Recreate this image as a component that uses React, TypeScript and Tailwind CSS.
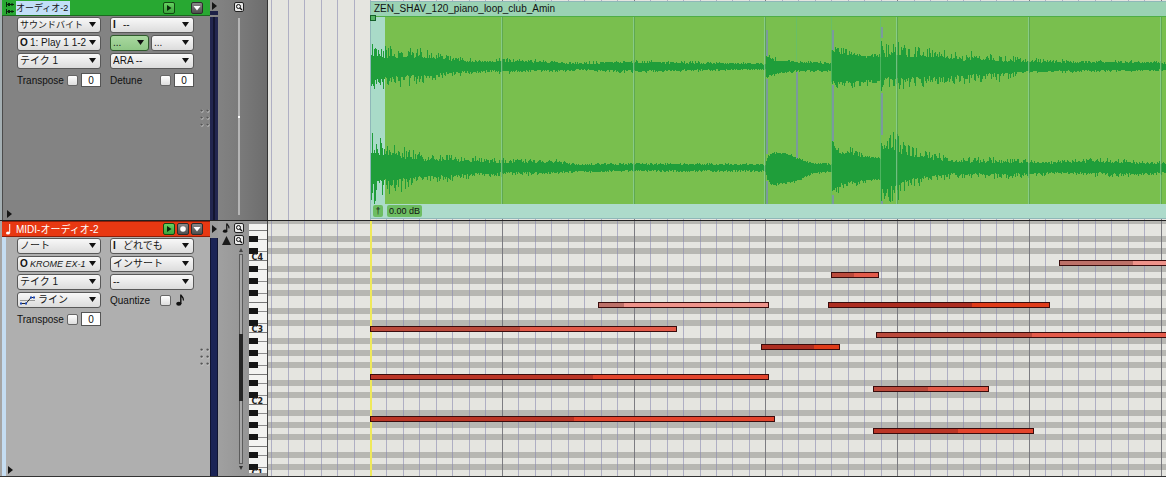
import React, { useState } from "react";

type Option = {
  label: string;
  text: string;
  prefix?: string;
  italic?: boolean;
  green?: boolean;
  curve?: boolean;
  small?: boolean;
};

type Note = { start: number; end: number; split: number; y: number; tone: Tone };
type Tone = "pink" | "light" | "mid" | "deep";

const BEAT = 16.475;
const ORIGIN = 102.5;
const LANE = 6;
const OCTAVE = 72;
const C4_TOP = 33;

// offset of each black key below the top of the C lane, going down the octave
const BLACK_OFFSETS = [12, 24, 36, 54, 66];

const TONES: Record<Tone, string> = {
  pink: "bg-[#ee938a]",
  light: "bg-[#e35a49]",
  mid: "bg-[#e3452d]",
  deep: "bg-[#df3b18]",
};

const TONES_DARK: Record<Tone, string> = {
  pink: "bg-[#bd7169]",
  light: "bg-[#bb4a3c]",
  mid: "bg-[#bb3526]",
  deep: "bg-[#ad2d20]",
};

const NOTES: Note[] = [
  { start: 102, end: 409, split: 251, y: 105, tone: "light" },
  { start: 102, end: 501, split: 324, y: 153, tone: "mid" },
  { start: 102, end: 507, split: 305, y: 195, tone: "mid" },
  { start: 330, end: 501, split: 355, y: 81, tone: "pink" },
  { start: 493, end: 572, split: 545, y: 123, tone: "deep" },
  { start: 563, end: 611, split: 585, y: 51, tone: "light" },
  { start: 560, end: 782, split: 703, y: 81, tone: "deep" },
  { start: 791, end: 1010, split: 864, y: 39, tone: "pink" },
  { start: 608, end: 1070, split: 763, y: 111, tone: "light" },
  { start: 605, end: 721, split: 659, y: 165, tone: "light" },
  { start: 605, end: 766, split: 689, y: 207, tone: "mid" },
];

// [x, peak above, peak below, roughness]
type Env = [number, number, number, number];

const LEFT_CHANNEL: Env[] = [
  [0, 22, 23, 0.5], [14, 17, 18, 0.5], [30, 18, 17, 0.5], [48, 17, 15, 0.5], [62, 14, 12, 0.4],
  [78, 10, 8, 0.4], [95, 8, 6, 0.35], [120, 7, 5, 0.35], [150, 7, 5, 0.3], [185, 5, 4, 0.3],
  [215, 4, 3, 0.3], [250, 6, 5, 0.35], [290, 5, 4, 0.3], [340, 4, 3, 0.3], [394, 3, 2, 0.2],
  [395, 12, 12, 0.2], [405, 8, 8, 0.3], [425, 5, 4, 0.2], [460, 4, 4, 0.2], [460, 18, 17, 0.2],
  [475, 17, 20, 0.3], [492, 12, 17, 0.2], [509, 11, 15, 0.2], [510, 29, 26, 0.1], [514, 20, 18, 0.5],
  [524, 23, 23, 0.5], [540, 19, 21, 0.5], [560, 16, 15, 0.4], [590, 12, 15, 0.5], [607, 15, 13, 0.5],
  [625, 11, 12, 0.5], [650, 8, 7, 0.4], [675, 6, 5, 0.3], [740, 6, 4, 0.3], [796, 4, 3, 0.2],
];

const RIGHT_CHANNEL: Env[] = [
  [0, 30, 33, 0.5], [8, 26, 24, 0.5], [25, 22, 21, 0.5], [40, 15, 18, 0.5], [55, 12, 13, 0.4],
  [80, 11, 11, 0.4], [110, 9, 8, 0.4], [150, 8, 6, 0.35], [185, 7, 5, 0.3], [205, 4, 4, 0.3],
  [260, 4, 3, 0.25], [330, 4, 3, 0.25], [394, 3, 3, 0.2], [396, 11, 12, 0.1], [401, 15, 17, 0.08],
  [414, 15, 16, 0.08], [428, 9, 12, 0.08], [440, 5, 6, 0.15], [460, 4, 3, 0.2], [461, 27, 27, 0.2],
  [470, 21, 21, 0.35], [485, 16, 17, 0.25], [497, 11, 12, 0.1], [509, 10, 12, 0.1], [510, 33, 35, 0.4],
  [524, 31, 31, 0.5], [540, 19, 16, 0.4], [560, 14, 12, 0.4], [580, 9, 9, 0.4], [610, 9, 9, 0.4],
  [660, 8, 8, 0.4], [680, 6, 5, 0.3], [720, 9, 7, 0.4], [755, 7, 8, 0.35], [796, 5, 5, 0.3],
];

function wavePath(env: Env[], center: number, seed: number) {
  let d = "";
  let s = seed;
  const rand = () => {
    s = (s * 16807) % 2147483647;
    return s / 2147483647;
  };
  // mostly a flat core, with a tall spike now and then
  const peak = (size: number, rough: number) => {
    const spike = Math.pow(rand(), 2.2);
    return Math.round(size * (1 - rough + rough * 1.4 * spike) + (rand() > 0.5 ? 1 : 0));
  };
  let i = 0;
  for (let x = 0; x < 796; x++) {
    while (i < env.length - 2 && env[i + 1][0] <= x) i++;
    const a = env[i];
    const b = env[i + 1];
    const t = b[0] === a[0] ? 1 : (x - a[0]) / (b[0] - a[0]);
    const mix = (k: number) => a[k] + (b[k] - a[k]) * t;
    const up = peak(mix(1), mix(3));
    const down = peak(mix(2), mix(3));
    d += `M${x + 0.5} ${center - up}V${center + down}`;
  }
  return d;
}

const LEFT_WAVE = wavePath(LEFT_CHANNEL, 50, 4711);
const RIGHT_WAVE = wavePath(RIGHT_CHANNEL, 151, 991);

function blackLanes() {
  const lanes: number[] = [];
  for (let octave = -1; octave < 4; octave++) {
    BLACK_OFFSETS.forEach((offset) => lanes.push(C4_TOP + octave * OCTAVE + offset));
  }
  return lanes;
}

const LANES = blackLanes();

function GridLines() {
  return (
    <>
      {Array.from({ length: 160 }, (_, i) => i - 6).map((k) => (
        <rect
          key={k}
          x={Math.floor(ORIGIN + k * BEAT)}
          y="0"
          width="1"
          height="100%"
          fill={k > 0 && k % 8 === 0 ? "#717178" : "#8a8ab0"}
          fillOpacity={k > 0 && k % 8 === 0 ? 0.9 : 0.6}
        />
      ))}
    </>
  );
}

function Select({ option, className }: { option: Option; className: string }) {
  return (
    <div className={`relative h-4 ${className}`}>
      {option.prefix && (
        <span className="pointer-events-none absolute left-[3px] top-0 text-[10px] leading-4 font-bold">
          {option.prefix}
        </span>
      )}
      {option.curve && (
        <svg className="pointer-events-none absolute left-[3px] top-[3px]" width="15" height="10" viewBox="0 0 15 10">
          <path d="M0 5.500H15" stroke="#999" />
          <path d="M1 8.500H6L11 2.500H14" fill="none" stroke="#222" />
          <path d="M0 7.500h2v2H0zM5 7.500h2v2H5zM10 1.500h2v2h-2zM13 1.500h2v2h-2z" fill="#1c49b8" />
        </svg>
      )}
      <select
        aria-label={option.label}
        className={`block h-4 w-full appearance-none overflow-hidden rounded-[3px] border leading-3 whitespace-nowrap text-[#161616] ${
          option.green
            ? "border-[#2f5a2c] bg-linear-to-b from-[#a9d8a0] to-[#8fc786]"
            : "border-[#585858] bg-linear-to-b from-[#f8f8f8] to-[#dcdcdc]"
        } ${option.prefix ? "pl-3" : option.curve ? "pl-5" : "pl-0.5"} ${option.italic ? "italic" : ""} ${
          option.small ? "text-[9px]" : "text-[10px]"
        }`}
      >
        <option>{option.text}</option>
      </select>
      <svg className="pointer-events-none absolute right-[5px] top-[5px]" width="7" height="5" viewBox="0 0 7 5">
        <path d="M0 0h7L3.500 5z" fill="#111" />
      </svg>
    </div>
  );
}

function CheckField({ label, id, value = true }: { label: string; id: string; value?: boolean }) {
  return (
    <div className="flex h-4 items-center justify-between text-[10px]">
      <label htmlFor={id}>{label}</label>
      <div className="flex items-center gap-[3px]">
        <input
          id={id}
          type="checkbox"
          className="h-[11px] w-[11px] appearance-none rounded-[2px] border border-[#666] bg-linear-to-b from-white to-[#dedede] checked:bg-gray-500"
        />
        {value ? (
          <input
            aria-label={`${label} value`}
            defaultValue="0"
            className="h-3.5 w-5 border border-[#555] bg-white text-center text-[10px] leading-3"
          />
        ) : (
          <span className="flex w-5 pl-0.5">
            <NoteIcon className="h-3 w-[9px]" />
          </span>
        )}
      </div>
    </div>
  );
}

function NoteIcon({ className }: { className: string }) {
  return (
    <svg className={className} viewBox="0 0 9 12">
      <ellipse cx="2.800" cy="9.800" rx="2.600" ry="2" fill="#111" />
      <path d="M4.800 10V.5C5.200 2.800 8.200 3.200 7.400 6.500" fill="none" stroke="#111" strokeWidth="1.400" />
    </svg>
  );
}

function TitleButton({ kind, label }: { kind: "play" | "rec" | "menu"; label: string }) {
  return (
    <button
      aria-label={label}
      className={`flex h-3 w-3 items-center justify-center rounded-[2px] border ${
        kind === "play"
          ? "border-[#124a12] bg-linear-to-b from-[#65d060] to-[#3ca53c]"
          : "border-[#2d2d2d] bg-linear-to-b from-[#888] to-[#4e4e4e]"
      }`}
    >
      <svg width="8" height="8" viewBox="0 0 8 8">
        {kind === "play" && <path d="M2 1v6L6.500 4z" fill="#0a280a" />}
        {kind === "rec" && <circle cx="4" cy="4" r="2.800" fill="#fff" />}
        {kind === "menu" && <path d="M.5 2h7L4 6.500z" fill="#fff" />}
      </svg>
    </button>
  );
}

function ZoomButton({ label }: { label: string }) {
  return (
    <button
      aria-label={label}
      className="flex h-2.5 w-2.5 items-center justify-center rounded-[2px] border border-[#222] bg-[#e8e8e8]"
    >
      <svg width="8" height="8" viewBox="0 0 8 8" fill="none" stroke="#111">
        <circle cx="3.500" cy="3.500" r="2" />
        <path d="M5 5l2 2" strokeWidth="1.300" />
      </svg>
    </button>
  );
}

function RightArrow() {
  return (
    <svg width="5" height="8" viewBox="0 0 5 8">
      <path d="M0 0v8l5-4z" fill="#161616" />
    </svg>
  );
}

function Grip() {
  return (
    <svg width="10" height="18" viewBox="0 0 10 18">
      {[2, 9, 16].map((y) =>
        [2, 8].map((x) => (
          <g key={`${x}-${y}`}>
            <circle cx={x} cy={y} r="1.500" fill="#d0d0d0" />
            <circle cx={x - 0.4} cy={y - 0.4} r="1.200" fill="#555" />
          </g>
        ))
      )}
    </svg>
  );
}

function AudioHeader() {
  const [name, setName] = useState("オーディオ-2");
  return (
    <div className="flex w-[210px] shrink-0 flex-col border-l-2 border-[#a5b0b4]">
      <div className="flex h-4 items-center gap-px border-b border-[#1a6a1f] bg-[#28a832] pl-[3px]">
        <svg width="10" height="14" viewBox="0 0 10 14" fill="#06250a">
          <path d="M1 1h1v5H1zM2 3h7v1H2zM3 2h2v3H3zM6 2.500h2v2H6z" />
          <path d="M1 8h1v5H1zM2 10h7v1H2zM3 9h2v3H3zM6 9.500h2v2H6z" />
        </svg>
        <input
          aria-label="Track name"
          value={name}
          onChange={(e) => setName(e.target.value)}
          className="h-3.5 w-[54px] bg-[#c2dff7] text-[9px] text-[#111]"
        />
        <div className="ml-auto flex gap-4 pr-[7px]">
          <TitleButton kind="play" label="Play enable" />
          <TitleButton kind="menu" label="Track menu" />
        </div>
      </div>
      <div className="flex flex-1 border-l border-[#4b4b4b] bg-[#838383]">
        <div className="flex w-[191px] flex-col pl-3.5">
          <div className="grid grid-cols-[84px_84px] gap-x-[9px] gap-y-0.5 pt-px">
            <Select className="w-full" option={{ label: "View", text: "サウンドバイト", small: true }} />
            <Select className="w-full" option={{ label: "Input", text: "--", prefix: "I" }} />
            <Select className="w-full" option={{ label: "Output", text: "1: Play 1  1-2", prefix: "O" }} />
            <div className="flex gap-0.5">
              <Select className="w-[39px]" option={{ label: "Send", text: "...", green: true }} />
              <Select className="flex-1" option={{ label: "Insert", text: "..." }} />
            </div>
            <Select className="w-full" option={{ label: "Take", text: "テイク 1" }} />
            <Select className="w-full" option={{ label: "ARA", text: "ARA --" }} />
            <div className="pt-px">
              <CheckField id="transpose-audio" label="Transpose" />
            </div>
            <div className="pt-px">
              <CheckField id="detune-audio" label="Detune" />
            </div>
          </div>
          <button aria-label="Expand track" className="mt-auto -ml-2.5 mb-0.5 w-[5px]">
            <RightArrow />
          </button>
        </div>
        <div className="flex flex-1 items-center justify-end">
          <Grip />
        </div>
      </div>
    </div>
  );
}

function MidiHeader() {
  return (
    <div className="flex w-[210px] shrink-0 flex-col border-l-2 border-[#a5a5a5]">
      <div className="flex h-4 items-center border-y border-[#8e1d08] bg-[#e83812] pl-1">
        <svg width="6" height="12" viewBox="0 0 6 12" fill="#fff">
          <ellipse cx="2" cy="10" rx="2" ry="1.500" />
          <path d="M3.200 1h1v9h-1z" />
        </svg>
        <span className="pl-1 text-[10px] text-white">MIDI-オーディオ-2</span>
        <div className="ml-auto flex gap-0.5 pr-[7px]">
          <TitleButton kind="play" label="Play enable" />
          <TitleButton kind="rec" label="Record enable" />
          <TitleButton kind="menu" label="Track menu" />
        </div>
      </div>
      <div className="flex flex-1 border-l-4 border-[#c5ddf2] bg-[#afafaf]">
        <div className="flex w-[188px] flex-col pl-[11px]">
          <div className="grid grid-cols-[84px_84px] gap-x-[9px] gap-y-0.5 pt-px">
            <Select className="w-full" option={{ label: "View", text: "ノート" }} />
            <Select className="w-full" option={{ label: "Input", text: "どれでも", prefix: "I" }} />
            <Select
              className="w-full"
              option={{ label: "Output", text: "KROME EX-1", prefix: "O", italic: true, small: true }}
            />
            <Select className="w-full" option={{ label: "Insert", text: "インサート" }} />
            <Select className="w-full" option={{ label: "Take", text: "テイク 1" }} />
            <Select className="w-full" option={{ label: "Patch", text: "--" }} />
            <Select className="w-full" option={{ label: "Edit mode", text: "ライン", curve: true }} />
            <CheckField id="quantize-midi" label="Quantize" value={false} />
            <div className="pt-px">
              <CheckField id="transpose-midi" label="Transpose" />
            </div>
          </div>
          <button aria-label="Expand track" className="mt-auto -ml-[9px] mb-0.5 w-[5px]">
            <RightArrow />
          </button>
        </div>
        <div className="flex flex-1 items-center justify-end">
          <Grip />
        </div>
      </div>
    </div>
  );
}

function AudioGutter() {
  return (
    <div className="flex w-[58px] shrink-0 border-r border-[#333] bg-linear-to-r from-[#858585] via-[#7b7b7b] to-[#6d6d6d]">
      <div className="flex w-2 flex-col">
        <div className="flex h-[11px] items-center justify-center">
          <RightArrow />
        </div>
        <div className="mb-0.5 h-1 bg-[#1d2147]" />
        <div className="flex flex-1 justify-center bg-[#22264f]">
          <span className="w-0.5 bg-[#13152f]" />
        </div>
      </div>
      <div className="flex flex-1 flex-col items-center gap-1.5 pt-0.5 pr-[7px] pb-[5px]">
        <ZoomButton label="Zoom waveform" />
        <input
          type="range"
          aria-label="Waveform height"
          defaultValue={50}
          className="min-h-0 w-0.5 flex-1 appearance-none bg-[#b5b5b5] [writing-mode:vertical-lr] [&::-webkit-slider-thumb]:h-0.5 [&::-webkit-slider-thumb]:w-0.5 [&::-webkit-slider-thumb]:appearance-none [&::-webkit-slider-thumb]:bg-white"
        />
      </div>
    </div>
  );
}

function Piano() {
  return (
    <div className="relative mt-[3px] mb-[3px] flex-1">
      <div className="absolute inset-0 overflow-hidden bg-[#f3f3f1]">
        <svg className="absolute inset-0 h-full w-full">
          {LANES.map((y) => (
            <g key={y}>
              <rect x="9" y={y} width="10" height="1" fill="#8d8d8d" />
              <rect x="0" y={y - 3} width="9" height={LANE} fill="#161616" />
            </g>
          ))}
          {[0, 1, 2, 3].map((i) => (
            <g key={i} fill="#777">
              <rect x="0" y={C4_TOP + 3 + i * OCTAVE} width="19" height="1" />
              <rect x="0" y={C4_TOP + 45 - OCTAVE + i * OCTAVE} width="19" height="1" />
            </g>
          ))}
        </svg>
        <div className="relative flex flex-col pt-[30px] pr-1 text-right font-['DejaVu_Sans',sans-serif] text-[8px] font-bold text-[#222]">
          <span className="mb-16 leading-2">C4</span>
          <span className="mb-16 leading-2">C3</span>
          <span className="mb-16 leading-2">C2</span>
          <span className="leading-2">C1</span>
        </div>
      </div>
    </div>
  );
}

function MidiGutter() {
  return (
    <div className="flex w-[58px] shrink-0 border-r border-[#444] bg-[#9c9c9c]">
      <div className="flex w-2 flex-col">
        <div className="flex h-[17px] items-center justify-center pb-0.5">
          <RightArrow />
        </div>
        <div className="flex-1 border-x border-[#101432] bg-[#1b2456]" />
      </div>
      <div className="flex w-[31px] flex-col bg-linear-to-r from-[#a0a0a0] to-[#959595]">
        <div className="flex flex-col gap-0.5 pt-0.5 pl-1">
          <div className="flex items-center gap-[3px]">
            <NoteIcon className="h-2.5 w-[9px]" />
            <ZoomButton label="Zoom pitch" />
          </div>
          <div className="flex items-center gap-[3px]">
            <svg width="9" height="9" viewBox="0 0 9 9">
              <path d="M4.500 0L9 9H0z" fill="#1b1b1b" />
            </svg>
            <ZoomButton label="Zoom velocity" />
          </div>
        </div>
        <div className="flex flex-1 flex-col items-center gap-0.5 pt-[3px] pr-0.5 pb-1.5 pl-4">
          <svg width="4" height="4" viewBox="0 0 4 4">
            <path d="M2 0l2 4H0z" fill="#444" />
          </svg>
          <input
            type="range"
            aria-label="Scroll notes"
            defaultValue={56}
            className="min-h-0 w-1 flex-1 appearance-none border border-[#5c5c5c] bg-[#a8a8a8] [writing-mode:vertical-lr] [&::-webkit-slider-thumb]:h-[67px] [&::-webkit-slider-thumb]:w-1 [&::-webkit-slider-thumb]:appearance-none [&::-webkit-slider-thumb]:bg-[#262626]"
          />
          <svg width="4" height="4" viewBox="0 0 4 4">
            <path d="M0 0h4L2 4z" fill="#333" />
          </svg>
        </div>
      </div>
      <Piano />
    </div>
  );
}

function AudioLane() {
  return (
    <div className="relative flex flex-1 overflow-hidden bg-[#e5e5e0]">
      <svg className="absolute inset-0 h-full w-full">
        <GridLines />
      </svg>
      <div className="relative mt-px mb-px ml-[102px] flex flex-1 flex-col border-y border-l border-[#8fb8b8]">
        <div className="h-3.5 bg-[#9ad2b3] pl-[3px] text-[10px] leading-3.5 text-[#111]">
          ZEN_SHAV_120_piano_loop_club_Amin
        </div>
        <div className="relative flex-1 border-t border-[#4fae45] bg-[#79bf4e]">
          <svg className="absolute inset-0 h-full w-full" shapeRendering="crispEdges">
            <rect x="0" y="0" width="14" height="100%" fill="#a9dbc8" />
            <path d={LEFT_WAVE} stroke="#1f9e3a" />
            <path d={RIGHT_WAVE} stroke="#1f9e3a" />
            {[131, 263, 394, 526, 658, 790].map((x) => (
              <g key={x}>
                <rect x={x - 1} y="0" width="1" height="100%" fill="#8fd0a0" fillOpacity="0.7" />
                <rect x={x} y="0" width="1" height="100%" fill="#4f9a50" fillOpacity="0.6" />
              </g>
            ))}
            <g fill="#7b9a9c">
              <path d="M395 13h2v26h-2zM395 62h2v75h-2zM395 164h2v24h-2z" />
              <path d="M425 55h2v86h-2z" />
              <path d="M461 13h2v20h-2zM461 68h2v56h-2zM461 178h2v10h-2z" />
              <path d="M510 10h2v11h-2zM510 76h2v42h-2zM510 184h2v4h-2z" />
            </g>
            <path d="M425.500 0V45M460.500 0V188M509.500 0V188" stroke="#62bd70" strokeOpacity="0.7" />
          </svg>
          <span className="absolute -top-0.5 -left-px h-1.5 w-1.5 border border-[#14602a] bg-[#55b565]" />
        </div>
        <div className="flex h-3.5 items-center gap-1 bg-[#addbcb] pl-0.5 text-[9px] leading-3 text-[#111]">
          <span className="w-2.5 rounded-[2px] bg-[#6dbd62] text-center">†</span>
          <span className="rounded-[2px] bg-[#6dbd62] px-0.5">0.00 dB</span>
        </div>
      </div>
    </div>
  );
}

function MidiLane() {
  return (
    <div className="relative flex-1 overflow-hidden bg-[#e5e5e0]">
      <svg className="absolute inset-0 h-full w-full">
        {LANES.map((y) => (
          <rect key={y} x="0" y={y} width="100%" height={LANE} fill="#b7b7b2" />
        ))}
        <GridLines />
        <rect x="102" y="0" width="2" height="100%" fill="#efe95a" />
      </svg>
      {NOTES.map((note) => (
        <div
          key={`${note.start}-${note.y}`}
          className={`absolute h-1.5 border border-[#3a0c0c] ${TONES[note.tone]}`}
          style={{ left: note.start, top: note.y, width: note.end - note.start }}
        >
          <div className={`h-full ${TONES_DARK[note.tone]}`} style={{ width: note.split - note.start }} />
        </div>
      ))}
    </div>
  );
}

export default function App() {
  return (
    <div className="flex min-h-screen flex-col overflow-hidden bg-[#9c9c9c] font-['Liberation_Sans','Noto_Sans_CJK_JP',sans-serif] text-[#111]">
      {/* Audio track */}
      <section className="flex h-[221px] border-b border-[#222]">
        <AudioHeader />
        <AudioGutter />
        <AudioLane />
      </section>

      {/* MIDI track */}
      <section className="flex flex-1 border-b border-[#333]">
        <MidiHeader />
        <MidiGutter />
        <MidiLane />
      </section>
    </div>
  );
}
